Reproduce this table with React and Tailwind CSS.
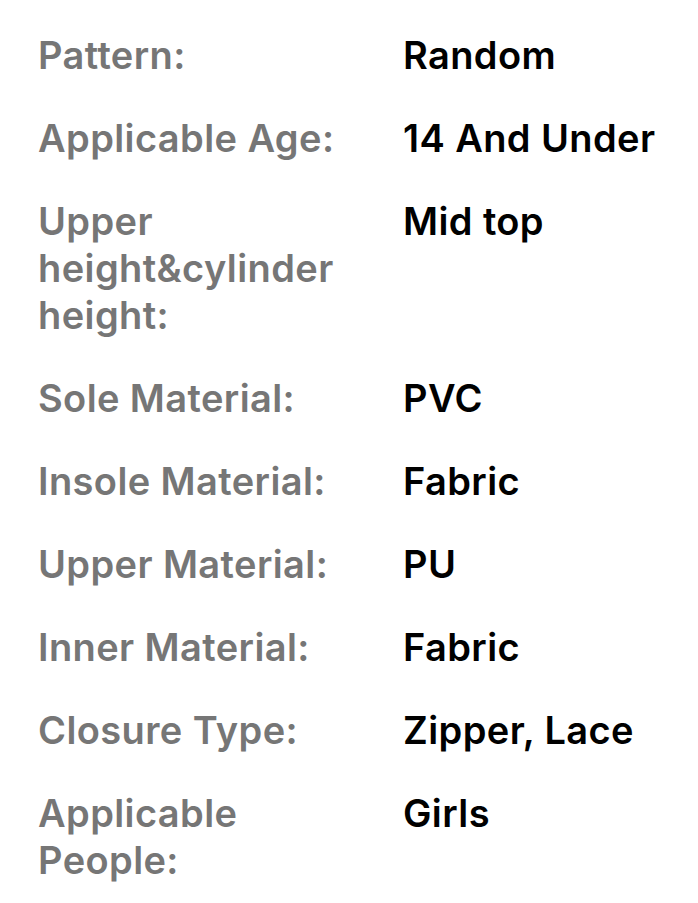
export default function App() {
  const rows = [
    ['Pattern:', 'Random'],
    ['Applicable Age:', '14 And Under'],
    ['Upper height&cylinder height:', 'Mid top'],
    ['Sole Material:', 'PVC'],
    ['Insole Material:', 'Fabric'],
    ['Upper Material:', 'PU'],
    ['Inner Material:', 'Fabric'],
    ['Closure Type:', 'Zipper, Lace'],
    ['Applicable People:', 'Girls'],
  ];

  return (
    <div className="min-h-screen bg-white pl-[38px] pt-[32px]" style={{ fontFamily: 'Inter, "Noto Sans", sans-serif' }}>
      <div className="flex flex-col gap-[36px]">
        {rows.map(([label, value]) => (
          <div key={label} className="flex text-[38px] leading-[47px] font-semibold tracking-[0.4px]">
            <div className="w-[365px] pr-[26px] text-[#767676]">{label}</div>
            <div className="text-black">{value}</div>
          </div>
        ))}
      </div>
    </div>
  );
}
